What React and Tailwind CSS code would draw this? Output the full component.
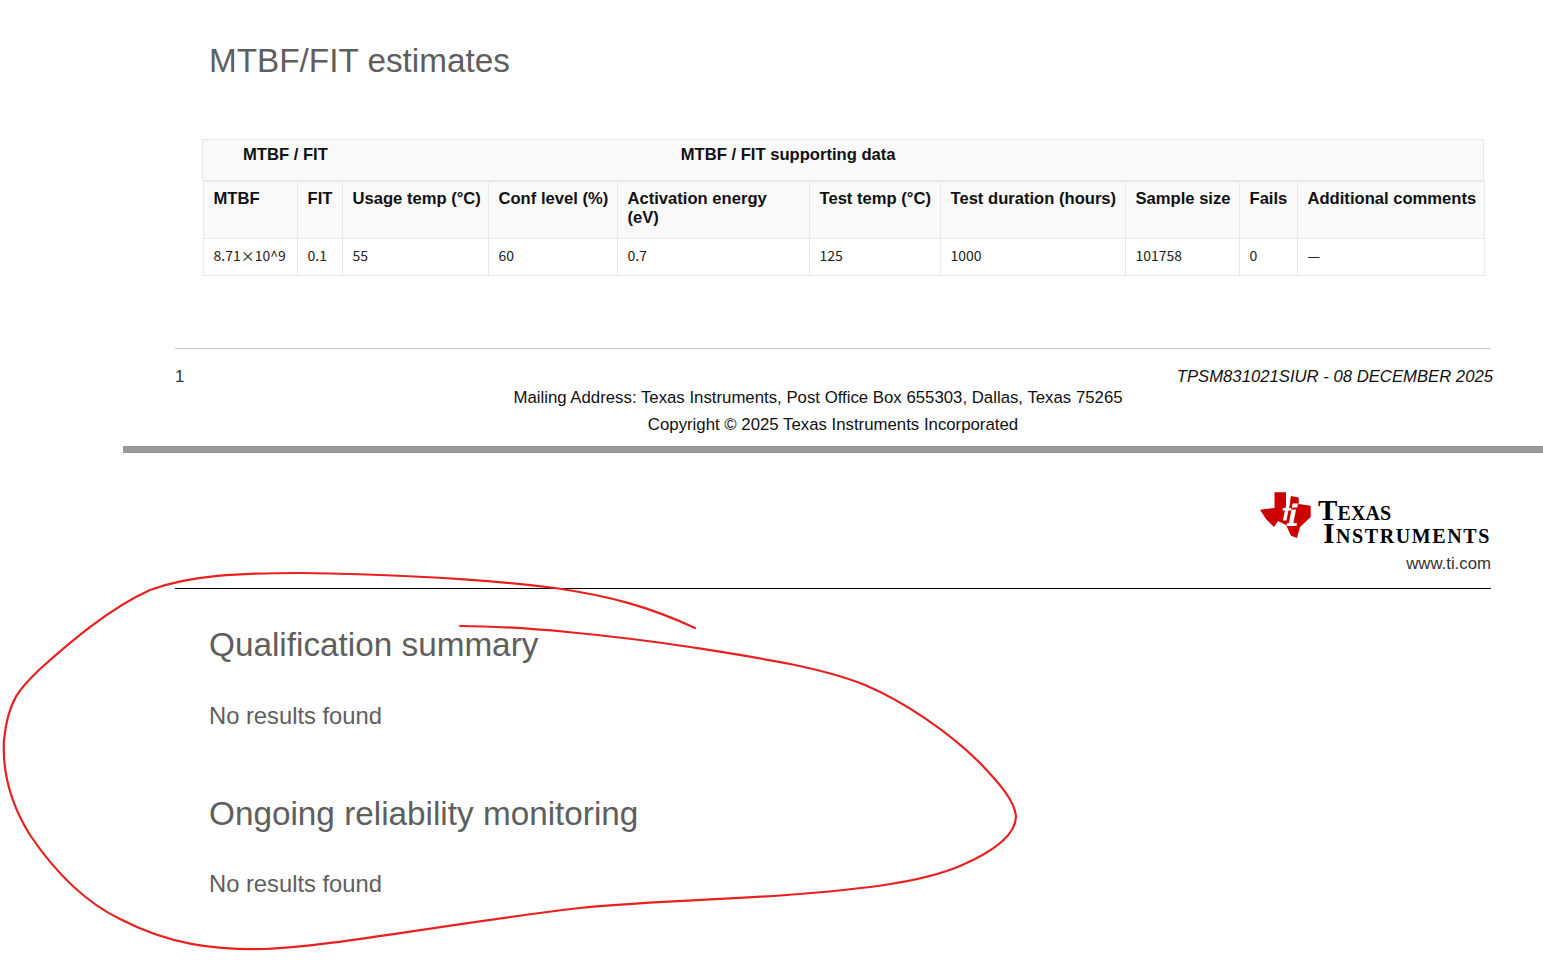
const columns = [
  { label: "MTBF", value: "8.71×10^9", width: "w-[94px]" },
  { label: "FIT", value: "0.1", width: "w-[45px]" },
  { label: "Usage temp (°C)", value: "55", width: "w-[146px]" },
  { label: "Conf level (%)", value: "60", width: "w-[129px]" },
  { label: "Activation energy\n(eV)", value: "0.7", width: "w-[192px]" },
  { label: "Test temp (°C)", value: "125", width: "w-[131px]" },
  { label: "Test duration (hours)", value: "1000", width: "w-[185px]" },
  { label: "Sample size", value: "101758", width: "w-[114px]" },
  { label: "Fails", value: "0", width: "w-[58px]" },
  { label: "Additional comments", value: "—", width: "w-[187px]" },
];

const TiEmblem = () => (
  <svg width="51" height="48" viewBox="0 0 51 48" className="shrink-0">
    <path
      fill="#cc0000"
      d="M14.5 1.3H26V13l3 1.5 2-9.5 7.7 1.5V13l12 1.7V26L40 36l-3 11-6-2.3L26 34l-8-4-4 6-8-8L0 18.7 14.5 17z"
    />
    <path
      fill="#ffffff"
      d="M27 10h3.5L29 17h2.5l-.6 2.5h-2.5l-2 10h-3.5l2-10h-2.5l.6-2.5h2.5zM32.6 12.5h5.5l-.8 4h-5.5zM31.5 18.5H36L33.4 32H37l-.6 3H26.5l.6-3H29z"
    />
  </svg>
);

const AnnotationLoop = () => (
  <svg className="absolute left-0 top-0 pointer-events-none" width="1543" height="960" viewBox="0 0 1543 960" fill="none">
    <path
      stroke="#e8201f"
      strokeWidth="2.2"
      strokeLinecap="round"
      d="M695 628C650 607 610 596 555 588C500 581 430 575 300 573C240 573 190 575 150 590C110 608 70 642 40 669C20 688 8 700 4 740C2 775 12 806 30 835C55 872 85 902 120 919C170 945 215 950 265 949C330 947 450 923 580 908C650 901 740 899 800 894C860 889 920 883 960 866C995 851 1016 835 1016 816C1014 800 1000 784 980 763C950 733 905 702 865 685C820 667 760 658 690 647C610 635 520 626 460 626"
    />
  </svg>
);

export default function App() {
  return (
    <div className="relative h-[960px] overflow-hidden bg-white font-['Liberation_Sans',Arial,sans-serif]">
      <div className="pl-[209px] pt-[41px]">
        <h2 className="text-[33.3px] leading-[40px] text-[#5e5e5e]">MTBF/FIT estimates</h2>
      </div>

      <div className="ml-[202px] mt-[58px] w-[1283px]">
        <div className="relative flex h-[42px] w-[1282px] items-start border border-[#e8e8e8] bg-[#f9f9f9] pt-[6px] text-[16.6px] font-bold leading-[18px] text-[#111111]">
          <span className="ml-[40px]">MTBF / FIT</span>
          <span className="ml-[353px]">MTBF / FIT supporting data</span>
        </div>
        <table className="ml-px table-fixed border-collapse">
          <thead>
            <tr>
              {columns.map((col) => (
                <th
                  key={col.label}
                  className={`${col.width} h-[57px] whitespace-pre border border-[#e8e8e8] bg-[#f9f9f9] pb-[11px] pl-[9.5px] pr-[6px] pt-[7px] text-left align-top text-[16.6px] font-bold leading-[19px] text-[#111111]`}
                >
                  {col.label}
                </th>
              ))}
            </tr>
          </thead>
          <tbody>
            <tr>
              {columns.map((col) => (
                <td
                  key={col.label}
                  className={`${col.width} h-[37px] border border-[#e8e8e8] pb-[5px] pl-[9.5px] font-['Noto_Sans_CJK_SC','Noto_Sans',sans-serif] text-sm text-[#222222]`}
                >
                  {col.value}
                </td>
              ))}
            </tr>
          </tbody>
        </table>
      </div>

      <footer className="ml-[175px] mt-[72px] w-[1318px]">
        <div className="h-px w-[1316px] bg-[#cccccc]" />
        <div className="flex justify-between pt-[18px] text-[16.7px] leading-[19px] text-[#111111]">
          <span className="text-[#333333]">1</span>
          <span className="italic">TPSM831021SIUR - 08 DECEMBER 2025</span>
        </div>
        <p className="mt-[2px] w-[1316px] pr-[30px] text-center text-[16.8px] leading-[19px] text-[#111111]">
          Mailing Address: Texas Instruments, Post Office Box 655303, Dallas, Texas 75265
        </p>
        <p className="mt-[8px] w-[1316px] text-center text-[16.8px] leading-[19px] text-[#111111]">
          Copyright © 2025 Texas Instruments Incorporated
        </p>
      </footer>

      <div className="ml-[123px] mt-[12px] h-[7px] bg-[#999999]" />

      <header className="ml-[175px] mt-[38px] flex w-[1316px] flex-col items-end border-b border-black pb-[15px]">
        <div className="flex items-start">
          <TiEmblem />
          <div className="ml-[7px] w-[173px] font-['Liberation_Serif',serif] font-bold text-black [font-variant:small-caps]">
            <div className="pt-[7px] text-[29px] leading-[24px] tracking-[0.1px]">Texas</div>
            <div className="text-right text-[29px] leading-[22px] tracking-[1.6px]">Instruments</div>
          </div>
        </div>
        <span className="mt-[11px] text-[16.8px] leading-[18px] text-[#333333]">www.ti.com</span>
      </header>

      <section className="pl-[209px] pt-[36px] text-[#5e5e5e]">
        <h2 className="text-[33.3px] leading-[40px]">Qualification summary</h2>
        <p className="mt-[37px] text-[23.75px] leading-[28px]">No results found</p>
        <h2 className="mt-[64px] text-[33.3px] leading-[40px]">Ongoing reliability monitoring</h2>
        <p className="mt-[36px] text-[23.75px] leading-[28px]">No results found</p>
      </section>

      <AnnotationLoop />
    </div>
  );
}
